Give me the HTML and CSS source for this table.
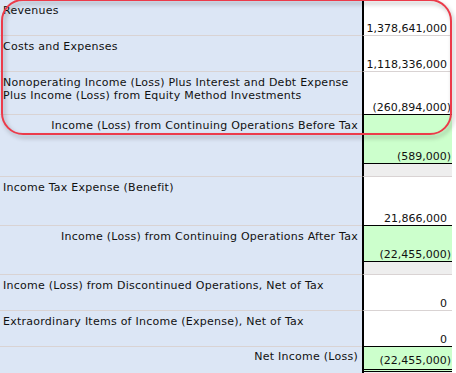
FILE: index.html
```html
<!DOCTYPE html>
<html>
<head>
<meta charset="utf-8">
<link rel="stylesheet" href="styles.css">
</head>
<body>
<div class="page">
  <div class="report">
    <div class="row h36">
      <div class="label">Revenues</div>
      <div class="val"><div class="cell"><span class="pos">1,378,641,000</span></div></div>
    </div>
    <div class="row h36">
      <div class="label">Costs and Expenses</div>
      <div class="val"><div class="cell"><span class="pos">1,118,336,000</span></div></div>
    </div>
    <div class="row h43">
      <div class="label">Nonoperating Income (Loss) Plus Interest and Debt Expense Plus Income (Loss) from Equity Method Investments</div>
      <div class="val ul"><div class="cell"><span>(260,894,000)</span></div></div>
    </div>
    <div class="row h62">
      <div class="label right">Income (Loss) from Continuing Operations Before Tax</div>
      <div class="val"><div class="cell total"><span>(589,000)</span></div><div class="gap"></div></div>
    </div>
    <div class="row h49">
      <div class="label">Income Tax Expense (Benefit)</div>
      <div class="val ul"><div class="cell"><span class="pos">21,866,000</span></div></div>
    </div>
    <div class="row h49">
      <div class="label right">Income (Loss) from Continuing Operations After Tax</div>
      <div class="val"><div class="cell total"><span>(22,455,000)</span></div><div class="gap"></div></div>
    </div>
    <div class="row h36">
      <div class="label">Income (Loss) from Discontinued Operations, Net of Tax</div>
      <div class="val"><div class="cell"><span class="pos">0</span></div></div>
    </div>
    <div class="row h36">
      <div class="label">Extraordinary Items of Income (Expense), Net of Tax</div>
      <div class="val ul"><div class="cell"><span class="pos">0</span></div></div>
    </div>
    <div class="row last">
      <div class="label right net">Net Income (Loss)</div>
      <div class="val"><div class="cell grand"><span>(22,455,000)</span></div><div class="gap"></div></div>
    </div>
  </div>
  <div class="callout"></div>
</div>
</body>
</html>
```
FILE: styles.css
```css
html, body {
  margin: 0;
  padding: 0;
  background: #ffffff;
}
.page {
  position: relative;
  width: 456px;
  height: 373px;
  overflow: hidden;
  font-family: "DejaVu Sans", Verdana, sans-serif;
  font-size: 11px;
  line-height: 13px;
  color: #111111;
}
.report {
  width: 452px;
  display: flex;
  flex-direction: column;
}
.row {
  display: flex;
  box-sizing: border-box;
}
.h36 { height: 36px; }
.h43 { height: 43px; }
.h49 { height: 49px; }
.h62 { height: 62px; }
.last { height: 40px; }
.label {
  width: 362px;
  box-sizing: border-box;
  background: #dce6f5;
  padding: 4px 3px 0 3px;
  border-bottom: 1px solid #d9d3d3;
  letter-spacing: 0.25px;
}
.label.right {
  text-align: right;
  padding-right: 4px;
}
.label.net {
  padding-top: 3px;
  border-bottom: none;
}
.val {
  width: 90px;
  box-sizing: border-box;
  border-left: 2px solid #000000;
  border-bottom: 1px solid #d9d3d3;
  display: flex;
  flex-direction: column;
}
.val.ul {
  border-bottom-color: #000000;
}
.cell {
  flex: 1;
  display: flex;
  align-items: flex-end;
  justify-content: flex-end;
  padding-right: 1px;
  background: #ffffff;
}
.pos {
  padding-right: 4px;
}
.cell.total {
  background: #ccffcc;
  border-bottom: 1px solid #000000;
}
.cell.grand {
  flex: none;
  height: 25px;
  box-sizing: border-box;
  background: #ccffcc;
  border-bottom: 3px double #000000;
  padding-bottom: 2px;
}
.gap {
  height: 12px;
  background: #eeeeee;
}
.row.last .val {
  border-bottom: none;
}
.callout {
  position: absolute;
  left: 1px;
  top: -1px;
  width: 451px;
  height: 136px;
  box-sizing: border-box;
  border: 2px solid #ec3b4a;
  border-radius: 22px;
  filter: drop-shadow(2px 3px 2px rgba(0, 0, 0, 0.3));
}
```
